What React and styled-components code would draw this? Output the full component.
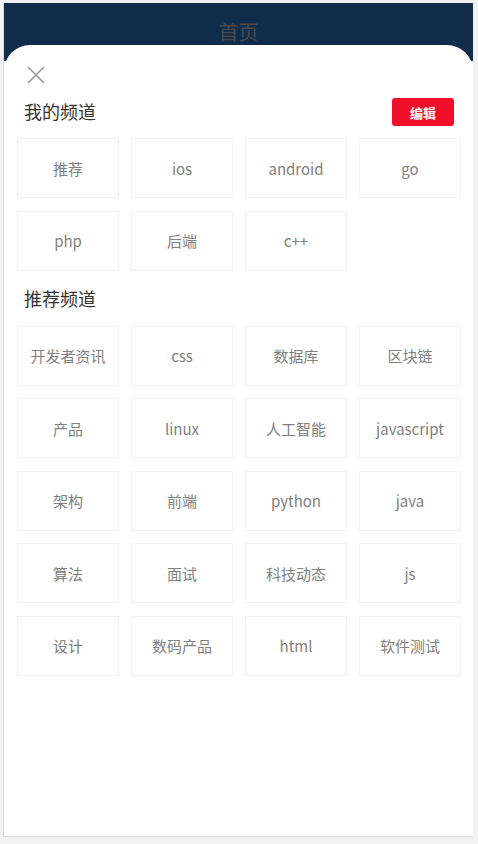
import React from 'react';
import styled, { createGlobalStyle } from 'styled-components';

const GlobalStyle = createGlobalStyle`
  html, body {
    margin: 0;
    padding: 0;
    background: #f2f2f2;
    font-family: "Noto Sans CJK SC", "Liberation Sans", sans-serif;
  }
`;

const myChannels = ['推荐', 'ios', 'android', 'go', 'php', '后端', 'c++'];
const recommended = [
  '开发者资讯', 'css', '数据库', '区块链',
  '产品', 'linux', '人工智能', 'javascript',
  '架构', '前端', 'python', 'java',
  '算法', '面试', '科技动态', 'js',
  '设计', '数码产品', 'html', '软件测试',
];

export default function App() {
  return (
    <>
      <GlobalStyle />
      <Phone>
        <NavBar>
          <NavTitle>首页</NavTitle>
        </NavBar>
        <Popup>
          <CloseButton aria-label="close">
            <svg width="18" height="18" viewBox="0 0 18 18">
              <path d="M1 1 L17 17 M17 1 L1 17" stroke="#999" strokeWidth="1.6" fill="none" />
            </svg>
          </CloseButton>
          <SectionHead>
            <SectionTitle>我的频道</SectionTitle>
            <EditButton>编辑</EditButton>
          </SectionHead>
          <Grid>
            {myChannels.map((c) => (
              <Tile key={c}>{c}</Tile>
            ))}
          </Grid>
          <SectionHead $compact>
            <SectionTitle>推荐频道</SectionTitle>
          </SectionHead>
          <Grid>
            {recommended.map((c) => (
              <Tile key={c}>{c}</Tile>
            ))}
          </Grid>
        </Popup>
      </Phone>
    </>
  );
}

const Phone = styled.div`
  position: relative;
  margin: 3px 0 0 3px;
  width: 470px;
  height: 834px;
  border-left: 1px solid #dcdcdc;
  border-bottom: 1px solid #dcdcdc;
  box-sizing: border-box;
  background: #fff;
  overflow: hidden;
`;

const NavBar = styled.div`
  height: 58px;
  background: #0f2c4b;
  display: flex;
  justify-content: center;
  align-items: center;
`;

const NavTitle = styled.span`
  color: #4a4a4a;
  font-size: 20px;
  line-height: 1;
`;

const Popup = styled.div`
  position: absolute;
  top: 42px;
  left: 0;
  right: 0;
  bottom: 0;
  background: #fff;
  border-radius: 26px 26px 0 0;
  padding: 0 12px 0 13px;
  display: flex;
  flex-direction: column;
`;

const CloseButton = styled.div`
  width: 18px;
  height: 18px;
  margin: 21px 0 0 10px;
  display: flex;
`;

const SectionHead = styled.div`
  display: flex;
  justify-content: space-between;
  align-items: center;
  height: 28px;
  margin: ${(p) => (p.$compact ? '14px 0 13px' : '14px 7px 12px 7px')};
  padding: ${(p) => (p.$compact ? '0 7px' : '0')};
`;

const SectionTitle = styled.span`
  font-size: 18px;
  color: #333;
  margin-top: -2px;
`;

const EditButton = styled.div`
  width: 62px;
  height: 28px;
  border-radius: 3px;
  background: #f0102a;
  color: #fff;
  font-size: 13px;
  font-weight: bold;
  display: flex;
  align-items: center;
  justify-content: center;
`;

const Grid = styled.div`
  display: grid;
  grid-template-columns: repeat(4, 102px);
  column-gap: 12px;
  row-gap: 12.5px;
`;

const Tile = styled.div`
  height: 60px;
  box-sizing: border-box;
  border: 1px solid #f2f2f2;
  display: flex;
  align-items: center;
  justify-content: center;
  font-size: 15px;
  color: #808080;
`;
